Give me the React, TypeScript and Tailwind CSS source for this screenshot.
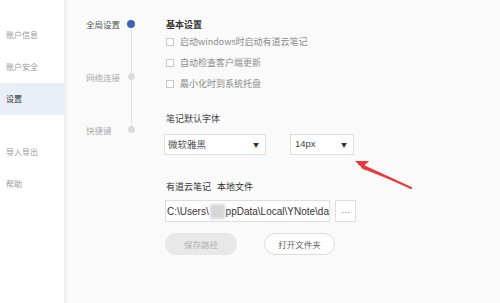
const sans = '"Microsoft YaHei", "Noto Sans CJK SC", "Liberation Sans", sans-serif'

function SideItem({ label, active }: { label: string; active?: boolean }) {
  return (
    <div
      className={`h-[32px] flex items-center pl-[6px] text-[8px] ${
        active ? 'bg-[#e9eef9] text-[#333]' : 'text-[#9a9a9a]'
      }`}
    >
      {label}
    </div>
  )
}

function Step({ label, active }: { label: string; active?: boolean }) {
  return (
    <div className="h-[53px] flex items-start">
      <span className={`w-[51px] pl-[17px] text-[8.5px] leading-[12px] whitespace-nowrap ${active ? 'text-[#555]' : 'text-[#aaa]'}`}>
        {label}
      </span>
      <span className="w-[22px] flex justify-center pt-[2px]">
        <span
          className={`relative z-10 rounded-full ${
            active ? 'w-[8px] h-[8px] bg-[#3d62b8]' : 'w-[7px] h-[7px] bg-[#dcdcdc]'
          }`}
        />
      </span>
    </div>
  )
}

function Check({ label }: { label: string }) {
  return (
    <div className="h-[21px] flex items-center gap-[6px]">
      <span className="w-[8px] h-[8px] border border-[#c8c8c8] bg-white" />
      <span className="text-[9px] text-[#8a8a8a]">{label}</span>
    </div>
  )
}

export default function App() {
  return (
    <div className="relative w-[500px] h-[303px] flex bg-[#fafafa] overflow-hidden" style={{ fontFamily: sans }}>
      {/* left menu */}
      <div className="w-[64px] bg-white pt-[19px] shrink-0">
        <SideItem label="账户信息" />
        <SideItem label="账户安全" />
        <SideItem label="设置" active />
        <div className="h-[21px]" />
        <SideItem label="导入导出" />
        <SideItem label="帮助" />
      </div>
      <div className="w-[5px] bg-gradient-to-r from-[#eeeeee] to-[#fafafa] shrink-0" />

      {/* steps */}
      <div className="relative w-[96px] pt-[18px] shrink-0">
        <div className="absolute left-[62px] top-[24px] w-[1px] h-[106px] bg-[#e2e2e2]" />
        <Step label="全局设置" active />
        <Step label="网络连接" />
        <Step label="快捷键" />
      </div>

      {/* content */}
      <div className="pt-[18px] pl-[1px] flex flex-col">
        <div className="text-[9px] font-bold text-[#333] leading-[14px]">基本设置</div>
        <div className="mt-[-1px]">
          <Check label="启动windows时启动有道云笔记" />
          <Check label="自动检查客户端更新" />
          <Check label="最小化时到系统托盘" />
        </div>

        <div className="mt-[18px] text-[9px] text-[#444] leading-[14px]">笔记默认字体</div>
        <div className="mt-[8px] flex gap-[24px] ml-[-2px]">
          <div className="w-[102px] h-[21px] bg-white border border-[#dedede] flex items-center justify-between px-[3px]">
            <span className="text-[9.5px] text-[#555]">微软雅黑</span>
            <span className="text-[6px] text-[#333] pr-[3px]">▼</span>
          </div>
          <div className="w-[64px] h-[21px] bg-white border border-[#dedede] flex items-center justify-between px-[4px]">
            <span className="text-[9.5px] text-[#444]" style={{ fontFamily: '"Liberation Sans", sans-serif' }}>14px</span>
            <span className="text-[6px] text-[#333] pr-[2px]">▼</span>
          </div>
        </div>

        <div className="mt-[25px] text-[9px] text-[#333] leading-[14px]">
          有道云笔记<span className="ml-[6px]">本地文件</span>
        </div>
        <div className="mt-[6px] flex gap-[5px] ml-[-1px]">
          <div
            className="w-[165px] h-[22px] bg-white border border-[#dedede] flex items-center pl-[1px] overflow-hidden whitespace-nowrap text-[10px] text-[#333]"
            style={{ fontFamily: '"Liberation Sans", sans-serif' }}
          >
            C:\Users\
            <span className="inline-block w-[34px] h-[15px] bg-[#d6d6d6] blur-[1.5px] mx-[1px]" />
            ppData\Local\YNote\da
          </div>
          <div
            className="w-[21px] h-[22px] bg-white border border-[#dedede] flex items-center justify-center text-[9px] text-[#888]"
            style={{ fontFamily: '"DejaVu Sans", sans-serif' }}
          >
            …
          </div>
        </div>
        <div className="mt-[11px] flex gap-[27px] ml-[-1px]">
          <div className="w-[72px] h-[22px] rounded-full bg-[#e8e8e8] flex items-center justify-center text-[8.5px] text-[#b0b0b0]">
            保存路径
          </div>
          <div className="w-[71px] h-[22px] rounded-full bg-white border border-[#dddddd] flex items-center justify-center text-[8.5px] text-[#666]">
            打开文件夹
          </div>
        </div>
      </div>

      {/* annotation arrow */}
      <svg className="absolute left-0 top-0 pointer-events-none" width="500" height="303" viewBox="0 0 500 303">
        <path d="M411 188 L362 166 L361 168 Z" fill="#e8383b" />
        <path d="M355 161 L369 161 L364 166 L366 171 Z" fill="#e8383b" />
        <path d="M411 188 L359 164" stroke="#e8383b" strokeWidth="2" strokeLinecap="round" />
      </svg>
    </div>
  )
}
